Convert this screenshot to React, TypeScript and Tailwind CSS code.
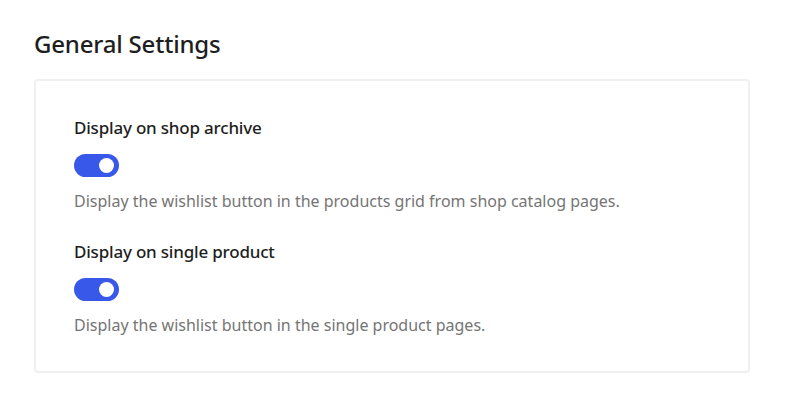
import { useState } from 'react'

const SETTINGS = [
  {
    id: 'archive',
    label: 'Display on shop archive',
    help: 'Display the wishlist button in the products grid from shop catalog pages.',
  },
  {
    id: 'single',
    label: 'Display on single product',
    help: 'Display the wishlist button in the single product pages.',
  },
]

function Toggle({ on, onChange }: { on: boolean; onChange: () => void }) {
  return (
    <button
      type="button"
      onClick={onChange}
      className={`relative h-[23px] w-[45px] rounded-full ${on ? 'bg-[#3858e9]' : 'bg-[#c3c4c7]'}`}
    >
      <span
        className={`absolute top-[4px] h-[15px] w-[15px] rounded-full bg-white ${on ? 'left-[25px]' : 'left-[5px]'}`}
      />
    </button>
  )
}

export default function App() {
  const [values, setValues] = useState<Record<string, boolean>>({ archive: true, single: true })

  return (
    <div className="min-h-[408px] bg-white px-[34px] pt-[28px] font-['Noto_Sans',sans-serif] text-[#1e1e1e]">
      <h2 className="text-[24px] leading-[32px] font-medium tracking-[-0.2px]">General Settings</h2>

      <div className="mt-[19px] w-[716px] rounded-[4px] border-2 border-[#f0f0f0] px-[38px] pt-[35px] pb-[34px]">
        {SETTINGS.map((s) => (
          <div key={s.id} className="mb-[27px] last:mb-0">
            <p className="text-[17px] leading-[24px] font-medium tracking-[-0.2px]">{s.label}</p>
            <div className="mt-[14px] flex">
              <Toggle
                on={values[s.id]}
                onChange={() => setValues((v) => ({ ...v, [s.id]: !v[s.id] }))}
              />
            </div>
            <p className="mt-[12px] text-[16px] leading-[24px] text-[#757575]">{s.help}</p>
          </div>
        ))}
      </div>
    </div>
  )
}
